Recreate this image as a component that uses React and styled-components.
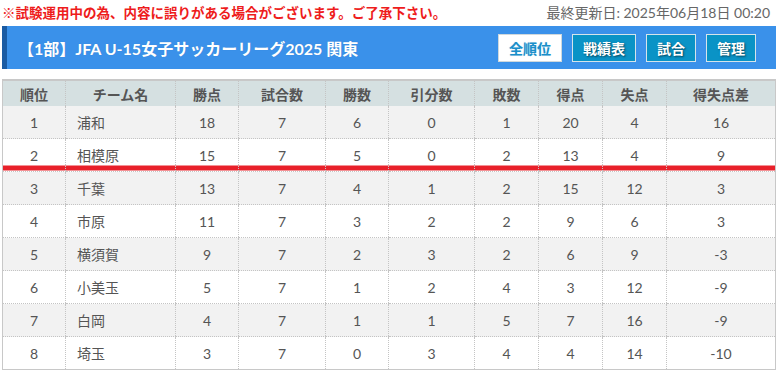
import React from 'react';
import styled, { createGlobalStyle } from 'styled-components';

const GlobalStyle = createGlobalStyle`
  html, body {
    margin: 0;
    padding: 0;
    background: #fff;
  }
  body {
    font-family: Lato, "Noto Sans CJK JP", "Noto Sans", sans-serif;
    color: #555;
  }
`;

const columns = [
  { label: '順位', width: 63 },
  { label: 'チーム名', width: 110 },
  { label: '勝点', width: 63 },
  { label: '試合数', width: 87 },
  { label: '勝数', width: 63 },
  { label: '引分数', width: 86 },
  { label: '敗数', width: 64 },
  { label: '得点', width: 64 },
  { label: '失点', width: 64 },
  { label: '得失点差' },
];

const teams = [
  [1, '浦和', 18, 7, 6, 0, 1, 20, 4, 16],
  [2, '相模原', 15, 7, 5, 0, 2, 13, 4, 9],
  [3, '千葉', 13, 7, 4, 1, 2, 15, 12, 3],
  [4, '市原', 11, 7, 3, 2, 2, 9, 6, 3],
  [5, '横須賀', 9, 7, 2, 3, 2, 6, 9, -3],
  [6, '小美玉', 5, 7, 1, 2, 4, 3, 12, -9],
  [7, '白岡', 4, 7, 1, 1, 5, 7, 16, -9],
  [8, '埼玉', 3, 7, 0, 3, 4, 4, 14, -10],
];

// line under this rank (promotion zone)
const CUT_AFTER = 2;

function App() {
  return (
    <Page>
      <GlobalStyle />
      <TopLine>
        <Notice>※試験運用中の為、内容に誤りがある場合がございます。ご了承下さい。</Notice>
        <Updated>最終更新日: 2025年06月18日 00:20</Updated>
      </TopLine>

      <TitleBar>
        <Title>【1部】JFA U-15女子サッカーリーグ2025 関東</Title>
        <Nav>
          <NavButton active>全順位</NavButton>
          <NavButton>戦績表</NavButton>
          <NavButton>試合</NavButton>
          <NavButton>管理</NavButton>
        </Nav>
      </TitleBar>

      <Table>
        <colgroup>
          {columns.map(c => (
            <col key={c.label} style={c.width ? { width: c.width } : undefined} />
          ))}
        </colgroup>
        <thead>
          <tr>
            {columns.map(c => (
              <Th key={c.label}>{c.label}</Th>
            ))}
          </tr>
        </thead>
        <tbody>
          {teams.map((t, i) => (
            <Row key={t[0]} odd={i % 2 === 0}>
              {t.map((v, j) => (
                <Td key={j} left={j === 1} cut={t[0] === CUT_AFTER}>
                  {v}
                </Td>
              ))}
            </Row>
          ))}
        </tbody>
      </Table>
    </Page>
  );
}

const Page = styled.div`
  width: 774px;
  padding-left: 2px;
`;

const TopLine = styled.div`
  height: 26px;
  display: flex;
  align-items: center;
  justify-content: space-between;
  padding-right: 6px;
`;

const Notice = styled.div`
  color: #ee1c1c;
  font-weight: bold;
  font-size: 13.5px;
  margin-top: -2px;
  white-space: nowrap;
`;

const Updated = styled.div`
  color: #666;
  font-size: 14px;
  margin-top: -2px;
  white-space: nowrap;
`;

const TitleBar = styled.div`
  height: 43px;
  box-sizing: border-box;
  background: #3a91ea;
  border-left: 5px solid #1a5ba3;
  display: flex;
  align-items: center;
  justify-content: space-between;
  padding: 0 20px 0 11px;
`;

const Title = styled.h1`
  margin: 0;
  color: #fff;
  font-size: 16px;
  font-weight: bold;
  text-shadow: 0 0 1px rgba(0, 0, 0, 0.15);
`;

const Nav = styled.div`
  display: flex;
  gap: 10px;
`;

const NavButton = styled.div`
  height: 28px;
  box-sizing: border-box;
  padding: 0 10px;
  display: flex;
  align-items: center;
  justify-content: center;
  font-size: 14px;
  font-weight: bold;
  border: 1px solid ${p => (p.active ? '#cfd8dc' : '#d6e4ea')};
  background: ${p => (p.active ? '#fff' : '#0a93c6')};
  color: ${p => (p.active ? '#1a8fca' : '#fff')};
  text-shadow: ${p => (p.active ? '0 0 1px rgba(26,143,202,0.3)' : '1px 1px 2px rgba(0,0,0,0.55)')};
  cursor: pointer;
`;

const Table = styled.table`
  margin-top: 10px;
  width: 774px;
  table-layout: fixed;
  border-collapse: collapse;
  border: 1px solid #c8c8c8;
  border-top-width: 2px;
  font-size: 14px;
  color: #555;
`;

const Th = styled.th`
  height: 25px;
  padding: 0;
  background: #d5e0e1;
  font-weight: bold;
  color: #555;
  text-align: center;
  border-left: 1px dotted #c4c4c4;
  &:first-child {
    border-left: none;
  }
`;

const Row = styled.tr`
  background: ${p => (p.odd ? '#f2f2f2' : '#fff')};
`;

const Td = styled.td`
  height: 32px;
  padding: ${p => (p.left ? '0 0 0 11px' : '0')};
  text-align: ${p => (p.left ? 'left' : 'center')};
  border-left: 1px dotted #c4c4c4;
  border-bottom: 1px dotted #c4c4c4;
  background: ${p =>
    p.cut
      ? 'linear-gradient(to bottom, transparent 26px, #e8202a 26px, #e8202a 31px, transparent 31px)'
      : 'transparent'};
  &:first-child {
    border-left: none;
  }
`;

export default App;
